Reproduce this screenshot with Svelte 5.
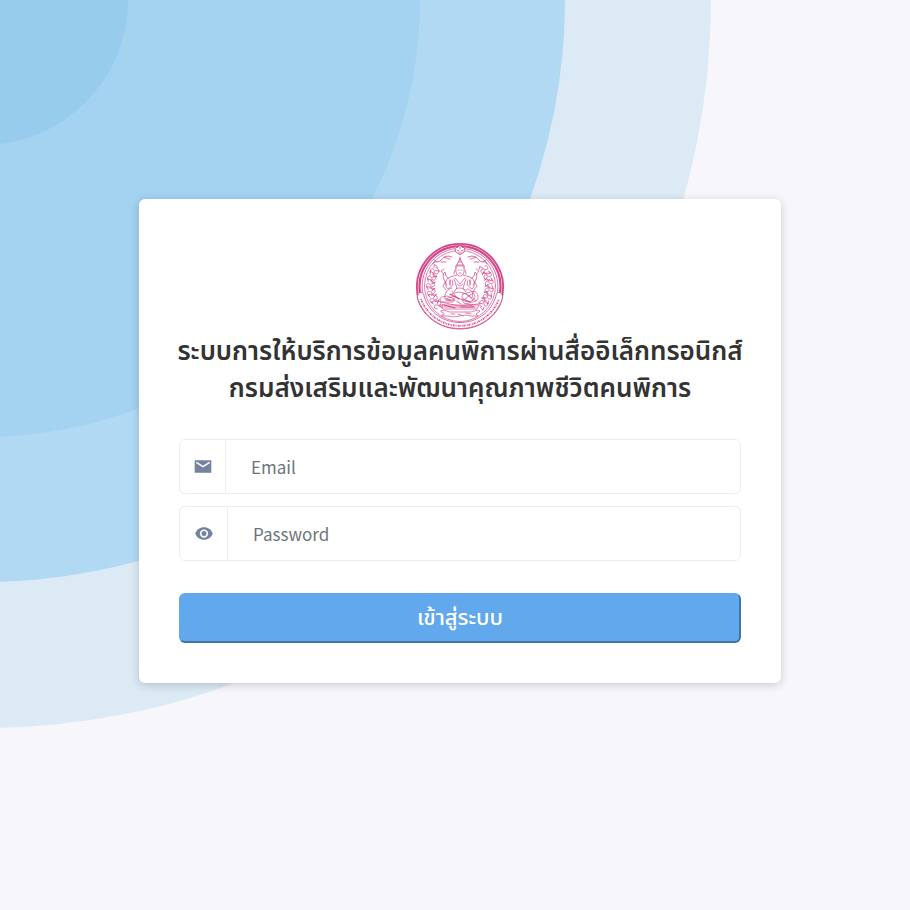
<script>
  let email = $state('');
  let password = $state('');

  // Scrollwork placed around the inner ring of the seal, in degrees from the top.
  const scrolls = [-128, -114, -100, -86, -72, -58, 58, 72, 86, 100, 114, 128];
</script>

<svelte:head>
  <title>เข้าสู่ระบบ</title>
</svelte:head>

<main class="page">
  <svg class="rings" aria-hidden="true">
    <circle cx="-17" cy="0" r="728" fill="#dceaf6" />
    <circle cx="-17" cy="0" r="582" fill="#b2d9f3" />
    <circle cx="-17" cy="0" r="437" fill="#a3d3f0" />
    <circle cx="-17" cy="0" r="145" fill="#97ccec" />
  </svg>

  <section class="card">
    <svg class="seal" viewBox="0 0 88 88" fill="none" stroke="#d4478a" stroke-linecap="round" aria-hidden="true">
      <path d="M2 54A43 43 0 1 1 86 54" stroke-width="1.800" />
      <path d="M4 51A40.500 40.500 0 1 1 84 51" stroke-width="2.200" />
      <path d="M7 53A38 38 0 1 1 81 53" stroke-width=".8" />
      <circle cx="44" cy="44" r="35.500" stroke-width=".7" />
      <path d="M1 51C1 68 19 87 44 87S87 68 87 51" stroke-width=".9" />
      <path fill="#fff" d="M1.500 56C1 49 8 49 8 54C13 71 28 80.500 44 80.500S75 71 80 54C80 49 87 49 86.500 56C80 75 64 86.500 44 86.500S8 75 1.500 56Z" stroke-width=".8" />
      <path d="M5 57C11 73 26 83.800 44 83.800S77 73 83 57" stroke-width="1.800" stroke-dasharray=".8 .9 1.500 .7 .5 .8" stroke-linecap="butt" />

      <g stroke-width=".8">
        <path fill="#fff" d="M39 4L41 6 44 3 47 6 49 4 48 10 44 13 40 10Z" />
        <path d="M41 8L43 9M47 8L45 9M42 11H46M44 4V7" />
        <path d="M17 22C20 17 22 22 25 18S29 16 34 17M21 20L18 18M25 20L30 20M28 15L32 14 36 15M71 22C68 17 66 22 63 18S59 16 54 17M67 20L70 18M63 20L58 20M60 15L56 14 52 15" />
      </g>

      {#each scrolls as angle}
        <g transform="rotate({angle} 44 44)" stroke-width=".7">
          <path d="M40 12C42 9 45 11 44 13S40 16 42 18 48 17 47 14M41 15L38 17 40 19M46 12L49 11 48 15M44 15L46 19" />
        </g>
      {/each}

      <g stroke-width=".7">
        <path d="M44 15V19M42.500 20L44 16 45.500 20M41 23L42 20H46L47 23M40 26V23H48V26M41 24H47" />
        <path d="M40 25C39 32 42 34 44 34S49 32 48 25M42 28H43M45 28H46M43 31H45M39 28L38 32M49 28L50 32" />
        <path d="M41 33L34 35C29 37 28 43 32 47L37 43 36 38M47 33L54 35C59 37 60 43 56 47L51 43 52 38" />
        <path d="M38 37L41 46 38 50M50 37L47 46 50 50M39 36L44 42 49 36M41 42C43 44 45 44 47 42M40 47C43 45 46 46 49 48" />
        <path d="M31 43L28 38 27 33 29 30 30 34 33 37M57 43L60 38 61 33 59 30 58 34 55 37M28 33L25 29 28 27M60 33L63 29 60 27M30 39L27 44 30 48M58 39L61 44 58 48" />
        <path d="M36 46C31 47 28 52 29 57L39 54 48 59C56 61 61 57 58 52S50 46 50 48M36 49L40 55M34 53C42 48 49 50 56 56" />
        <path d="M47 52L58 49C63 51 63 57 60 59L49 62C46 59 45 55 47 52M58 49C55 52 56 57 60 59M50 52L57 58M49 57L57 51" />
        <path d="M26 55L31 54 39 57 37 60H25L24 57ZM25 60L43 64 62 62M24 63H63L61 67H27ZM28 65H60M31 57L35 59M40 59L45 62M52 62L58 65" />
        <path d="M25 69C29 67 31 70 35 70H54C58 70 60 67 64 69L60 72 62 74 54 74C47 71 40 77 33 74L25 74 28 72ZM35 72H39M42 72L47 74M50 71L55 72" />
      </g>
      <path d="M30 58H38M34 52L43 57M47 57L54 60M28 63L39 66M45 65H57M34 38V43M54 38V43" stroke-width="1.100" />
    </svg>

    <h1>
      <span>ระบบการให้บริการข้อมูลคนพิการผ่านสื่ออิเล็กทรอนิกส์</span>
      <span>กรมส่งเสริมและพัฒนาคุณภาพชีวิตคนพิการ</span>
    </h1>

    <form onsubmit={(event) => event.preventDefault()}>
      <div class="field">
        <label for="email" aria-label="Email">
          <svg class="icon" viewBox="0 0 24 24" aria-hidden="true">
            <path d="M2 4H22V19H2ZM4 5.500V7.500L12 12.500 20 7.500V5.500L12 10.500Z" fill-rule="evenodd" />
          </svg>
        </label>
        <input id="email" type="email" placeholder="Email" bind:value={email} />
      </div>
      <div class="field">
        <label class="wide" for="password" aria-label="Password">
          <svg class="icon" viewBox="0 0 24 24" aria-hidden="true">
            <path d="M12 4C7 4 3 7 1.500 11.500 3 16 7 19 12 19s9-3 10.500-7.500C21 7 17 4 12 4zM12 16.500a5 5 0 1 1 0-10 5 5 0 0 1 0 10zm0-8a3 3 0 1 0 0 6 3 3 0 0 0 0-6z" />
          </svg>
        </label>
        <input id="password" type="password" placeholder="Password" bind:value={password} />
      </div>
      <button type="submit">เข้าสู่ระบบ</button>
    </form>
  </section>
</main>

<style>
  :global(body) {
    margin: 0;
    background: #f6f6fb;
  }

  .page {
    position: relative;
    box-sizing: border-box;
    display: flex;
    align-items: center;
    justify-content: center;
    min-height: 100vh;
    padding: 0 0 28px 10px;
    overflow: hidden;
    font-family: 'Noto Sans', 'Noto Sans Thai', sans-serif;
  }

  .rings {
    position: absolute;
    inset: 0;
    width: 100%;
    height: 100%;
  }

  .card {
    position: relative;
    box-sizing: border-box;
    width: 100%;
    max-width: 642px;
    padding: 43px 40px 40px;
    border-radius: 6px;
    background: #fff;
    box-shadow: 0 2px 10px rgba(0, 0, 0, 0.18);
  }

  .seal {
    display: block;
    width: 88px;
    height: 88px;
    margin: 0 auto 2px;
  }

  h1 {
    margin: 0 0 33px;
    color: #333;
    font-size: 26px;
    font-weight: 600;
    line-height: 37px;
    text-align: center;
  }

  h1 span {
    display: block;
  }

  @media (min-width: 660px) {
    h1 {
      display: flex;
      flex-direction: column;
      align-items: center;
      white-space: nowrap;
    }
  }

  form {
    display: flex;
    flex-direction: column;
    gap: 12px;
  }

  .field {
    display: flex;
    box-sizing: border-box;
    height: 55px;
    border: 1px solid #ebedf2;
    border-radius: 6px;
  }

  label {
    display: flex;
    flex: none;
    align-items: center;
    justify-content: center;
    width: 45px;
    border-right: 1px solid #ebedf2;
  }

  .wide {
    width: 47px;
  }

  .icon {
    width: 20px;
    height: 20px;
    fill: #76839f;
  }

  input {
    flex: 1;
    min-width: 0;
    padding: 0 25px;
    border: 0;
    border-radius: 6px;
    background: transparent;
    color: #495057;
    font: 17px 'Noto Sans CJK SC', 'Noto Sans Thai', sans-serif;
  }

  input::placeholder {
    color: #6c757d;
  }

  button {
    height: 50px;
    margin-top: 20px;
    border: 2px solid;
    border-color: #62a8ec #3f76a9 #3f76a9 #62a8ec;
    border-radius: 6px;
    background: #62a8ec;
    color: #fff;
    font: 500 22px 'Noto Sans', 'Noto Sans Thai', sans-serif;
    cursor: pointer;
  }
</style>
